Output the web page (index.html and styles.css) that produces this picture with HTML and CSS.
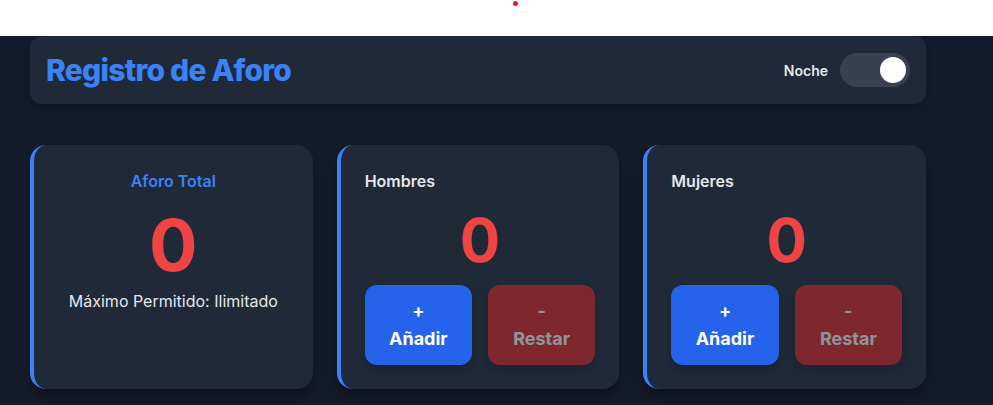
FILE: index.html
```html
<!DOCTYPE html>
<html lang="es">
<head>
<meta charset="utf-8">
<title>Registro de Aforo</title>
<link rel="stylesheet" href="styles.css">
</head>
<body>
<div class="topbar"><span class="dot"></span></div>
<main class="page">
  <div class="container">
    <header class="header">
      <h1 class="title">Registro de Aforo</h1>
      <div class="mode">
        <span class="mode-label">Noche</span>
        <span class="switch"><span class="knob"></span></span>
      </div>
    </header>
    <section class="grid">
      <div class="card card-total">
        <div class="total-label">Aforo Total</div>
        <div class="num num-big">0</div>
        <div class="max">Máximo Permitido: Ilimitado</div>
      </div>
      <div class="card">
        <div class="label">Hombres</div>
        <div class="num">0</div>
        <div class="buttons">
          <button class="btn btn-add">+<br>Añadir</button>
          <button class="btn btn-sub">-<br>Restar</button>
        </div>
      </div>
      <div class="card">
        <div class="label">Mujeres</div>
        <div class="num">0</div>
        <div class="buttons">
          <button class="btn btn-add">+<br>Añadir</button>
          <button class="btn btn-sub">-<br>Restar</button>
        </div>
      </div>
    </section>
  </div>
</main>
</body>
</html>
```

FILE: styles.css
```css
* { box-sizing: border-box; }
html, body { margin: 0; padding: 0; }
body {
  font-family: Inter, "Noto Sans", "Liberation Sans", sans-serif;
  background: #141b2b;
  height: 405px;
  overflow: hidden;
}
.topbar {
  height: 36px;
  background: #ffffff;
  position: relative;
}
.dot {
  position: absolute;
  left: 513px;
  top: 1px;
  width: 5px;
  height: 5px;
  border-radius: 50%;
  background: #e11d1d;
}
.page {
  background: #141b2b;
  height: 369px;
  padding-left: 30px;
}
.container {
  width: 896px;
}
.header {
  height: 68px;
  background: #1f2937;
  border-radius: 12px;
  padding: 0 16px;
  display: flex;
  align-items: center;
  justify-content: space-between;
  box-shadow: 0 4px 8px rgba(0,0,0,0.2);
  margin-bottom: 41px;
}
.title {
  margin: 0;
  font-size: 30px;
  line-height: 36px;
  font-weight: 800;
  letter-spacing: -0.025em;
  color: #3b82f6;
}
.mode {
  display: flex;
  align-items: center;
  gap: 12px;
}
.mode-label {
  font-size: 14px;
  font-weight: 600;
  color: #e5e7eb;
}
.switch {
  width: 70px;
  height: 34px;
  border-radius: 17px;
  background: #374151;
  display: flex;
  align-items: center;
  justify-content: flex-end;
  padding-right: 4px;
}
.knob {
  width: 26px;
  height: 26px;
  border-radius: 50%;
  background: #ffffff;
}
.grid {
  display: grid;
  grid-template-columns: repeat(3, 1fr);
  gap: 24px;
}
.card {
  background: #1f2937;
  border-radius: 16px;
  border-left: 4px solid #3b82f6;
  padding: 24px 24px 23px 24px;
  box-shadow: 0 10px 15px -3px rgba(0,0,0,0.3), 0 4px 6px -4px rgba(0,0,0,0.3);
  height: 244px;
  display: flex;
  flex-direction: column;
}
.card-total { align-items: center; }
.total-label {
  font-size: 16px;
  line-height: 24px;
  font-weight: 600;
  color: #3b82f6;
}
.label {
  font-size: 16px;
  line-height: 24px;
  font-weight: 600;
  color: #e5e7eb;
}
.num {
  font-size: 60px;
  line-height: 60px;
  font-weight: 700;
  color: #ef4444;
  text-align: center;
  margin: 17px 0 15px;
}
.num-big {
  font-size: 72px;
  line-height: 72px;
  margin: 16px 0 0;
}
.max {
  margin-top: 8px;
  font-size: 16px;
  line-height: 24px;
  color: #e5e7eb;
}
.buttons {
  display: grid;
  grid-template-columns: 1fr 1fr;
  gap: 16px;
}
.btn {
  font-family: inherit;
  height: 80px;
  border: none;
  border-radius: 12px;
  font-size: 18px;
  line-height: 28px;
  font-weight: 700;
  color: #ffffff;
  padding: 12px 0;
  box-shadow: 0 4px 6px -1px rgba(0,0,0,0.25);
}
.btn-add { background: #2563eb; }
.btn-sub { background: #dc2626; opacity: 0.5; }
```
